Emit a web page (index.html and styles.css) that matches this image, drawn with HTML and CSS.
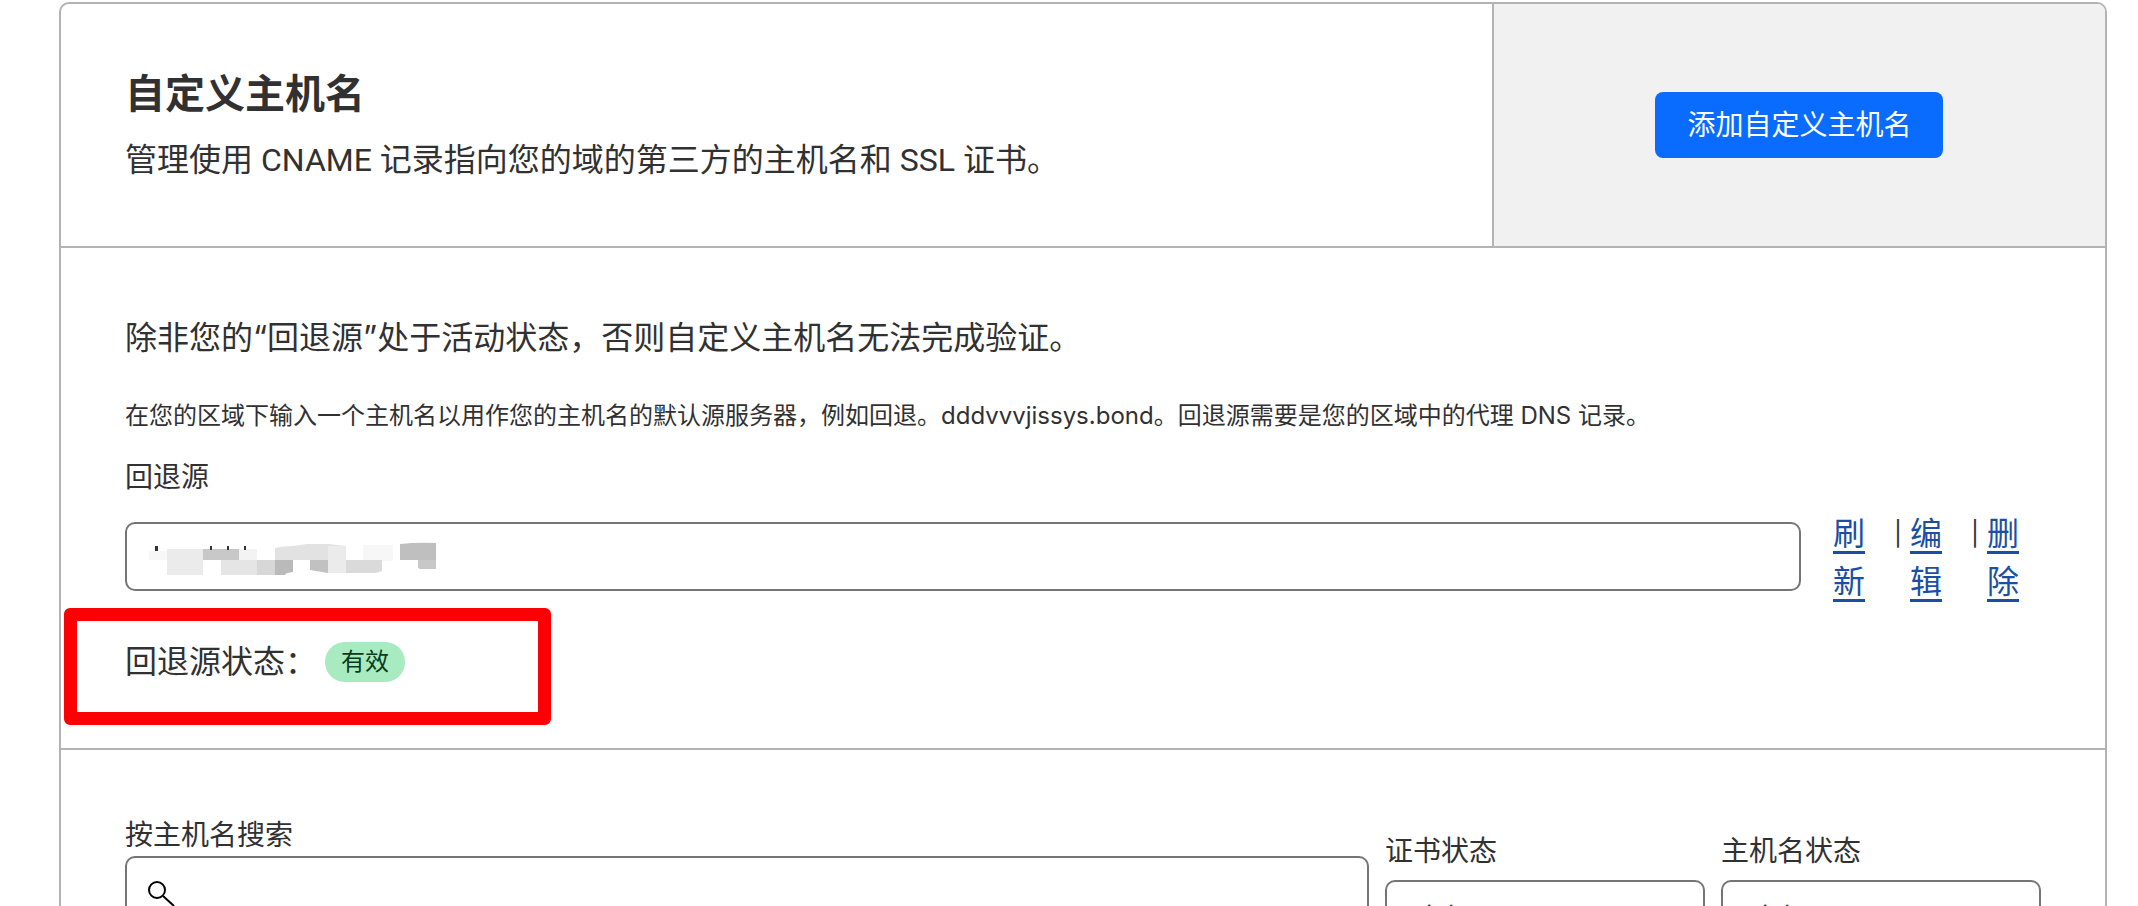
FILE: index.html
```html
<!DOCTYPE html>
<html lang="zh-CN">
<head>
<meta charset="utf-8">
<title>自定义主机名</title>
<link rel="stylesheet" href="styles.css">
</head>
<body>
<main class="card">
  <header class="card-header">
    <div class="intro">
      <h1 class="title">自定义主机名</h1>
      <p class="subtitle">管理使用 CNAME 记录指向您的域的第三方的主机名和 SSL 证书。</p>
    </div>
    <div class="actions">
      <button class="primary" type="button">添加自定义主机名</button>
    </div>
  </header>

  <section class="fallback">
    <p class="notice">除非您的“回退源”处于活动状态，否则自定义主机名无法完成验证。</p>
    <p class="hint">在您的区域下输入一个主机名以用作您的主机名的默认源服务器，例如回退。dddvvvjissys.bond。回退源需要是您的区域中的代理 DNS 记录。</p>
    <label class="label" for="origin">回退源</label>
    <div class="origin-row">
      <div class="origin-field">
        <input class="field" id="origin" type="text">
        <svg class="masked" viewBox="0 0 300 36" aria-hidden="true">
          <path fill="#f7f7f7" d="M6 10h90v9H6zM220 4h30v16h-30z"/>
          <path fill="#ebebeb" d="M24 8h36v26H24z"/>
          <path fill="#c8c8c8" d="M60 8h36v11H60z"/>
          <path fill="#f3f3f3" d="M96 8h18v11H96z"/>
          <path fill="#e5e5e5" d="M78 19h36v15H78z"/>
          <path fill="#d7d7d7" d="M114 19h18v15h-18z"/>
          <path fill="#bababa" d="M132 19h18v12q-8 1-8 3h-10z"/>
          <path fill="#e2e2e2" d="M132 7q8-2 18-2l14-2h22l17 2v14h-71z"/>
          <path fill="#c1c1c1" d="M167 19h18v13l-18-3z"/>
          <path fill="#ebebeb" d="M185 5h18v27h-18z"/>
          <path fill="#dadada" d="M203 19h36v11l-6 2h-30z"/>
          <path fill="#bfbfbf" d="M257 3q18-2 36-1v17h-36z"/>
          <path fill="#c8c8c8" d="M275 19h18v9h-14q-4 0-4-2z"/>
          <path fill="#333" d="M12 5h3v5h-3zM67 5h2v4h-2zM84 5h2v4h-2zM101 5h2v4h-2z"/>
        </svg>
      </div>
      <nav class="links">
        <a class="link" href="#refresh">刷新</a>
        <span class="bar">|</span>
        <a class="link" href="#edit">编辑</a>
        <span class="bar">|</span>
        <a class="link" href="#delete">删除</a>
      </nav>
    </div>
    <div class="status">
      <span>回退源状态：</span>
      <span class="badge">有效</span>
      <div class="highlight"></div>
    </div>
  </section>

  <section class="filters">
    <div class="search">
      <label class="label" for="search">按主机名搜索</label>
      <div class="search-field">
        <input class="field" id="search" type="search">
        <svg class="search-icon" viewBox="0 0 28 28" aria-hidden="true"><circle cx="10" cy="10" r="8"/><path d="M16 16l11 10"/></svg>
      </div>
    </div>
    <div class="filter">
      <label class="label" for="cert">证书状态</label>
      <select class="field" id="cert"><option>全部</option></select>
    </div>
    <div class="filter">
      <label class="label" for="host">主机名状态</label>
      <select class="field" id="host"><option>全部</option></select>
    </div>
  </section>
</main>
</body>
</html>
```
FILE: styles.css
```css
* {
  box-sizing: border-box;
}

body {
  height: 100vh;
  margin: 0;
  overflow: hidden;
  background: #fff;
  color: #313131;
  font-family: Inter, "Noto Sans CJK SC", sans-serif;
  font-size: 32px;
  line-height: 48px;
}

h1,
p {
  margin: 0;
}

.card {
  margin: 2px 31px 0 59px;
  border: 2px solid #b3b3b3;
  border-radius: 10px;
  background: #fff;
}

.card-header {
  display: grid;
  grid-template-columns: 7fr 3fr;
  border-bottom: 2px solid #b3b3b3;
}

.intro {
  padding: 62px 64px;
}

.title {
  font-size: 40px;
  line-height: 56px;
  font-weight: 700;
}

.subtitle {
  padding: 14px 0 0;
  font-family: Roboto, "Noto Sans CJK SC", sans-serif;
}

.actions {
  display: flex;
  align-items: center;
  justify-content: center;
  border-left: 2px solid #b3b3b3;
  border-radius: 0 8px 0 0;
  background: #f1f1f1;
}

.primary {
  height: 66px;
  padding: 0 32px;
  border: 0;
  border-radius: 8px;
  background: #0a6cff;
  color: #fff;
  font: inherit;
  font-size: 28px;
}

.fallback {
  padding: 66px 64px 62px;
  border-bottom: 2px solid #b3b3b3;
}

.notice {
  margin-bottom: 36px;
}

.hint {
  font-size: 24px;
  line-height: 36px;
  margin-bottom: 22px;
}

.label {
  display: block;
  font-size: 28px;
  line-height: 42px;
}

.field {
  display: block;
  width: 100%;
  height: 69px;
  padding: 0 28px;
  border: 2px solid #757575;
  border-radius: 10px;
  background: #fff;
  color: #313131;
  font: inherit;
  font-size: 28px;
  appearance: none;
}

.origin-row {
  display: flex;
  align-items: flex-start;
  gap: 32px;
  margin-top: 12px;
}

.origin-field {
  position: relative;
  flex: 1;
  padding-top: 12px;
}

.masked {
  position: absolute;
  left: 18px;
  top: 31px;
  width: 300px;
  height: 36px;
}

.links {
  display: flex;
  padding-right: 22px;
}

.link {
  width: 32px;
  color: #1a4fa3;
  text-decoration: underline;
  text-decoration-thickness: 3px;
  text-underline-offset: 6px;
}

.bar {
  width: 45px;
  padding-right: 8px;
  font-size: 24px;
  text-align: right;
}

.status {
  position: relative;
  display: flex;
  align-items: center;
  gap: 8px;
  margin-top: 32px;
}

.highlight {
  position: absolute;
  left: -61px;
  top: -30px;
  width: 487px;
  height: 117px;
  border: 13px solid #fd0006;
  border-radius: 6px;
}

.badge {
  padding: 0 16px;
  border-radius: 20px;
  background: #a8ebc0;
  color: #0d3a1c;
  font-size: 24px;
  line-height: 40px;
}

.filters {
  display: flex;
  gap: 16px;
  padding: 64px;
}

.search {
  flex: 1;
}

.search-field {
  position: relative;
}

.search-icon {
  position: absolute;
  left: 22px;
  top: 24px;
  width: 28px;
  height: 28px;
  fill: none;
  stroke: #000;
  stroke-width: 2;
}

.filter {
  width: 320px;
  padding-top: 16px;
}

.filter .field {
  height: 78px;
  margin-top: 8px;
}
```
